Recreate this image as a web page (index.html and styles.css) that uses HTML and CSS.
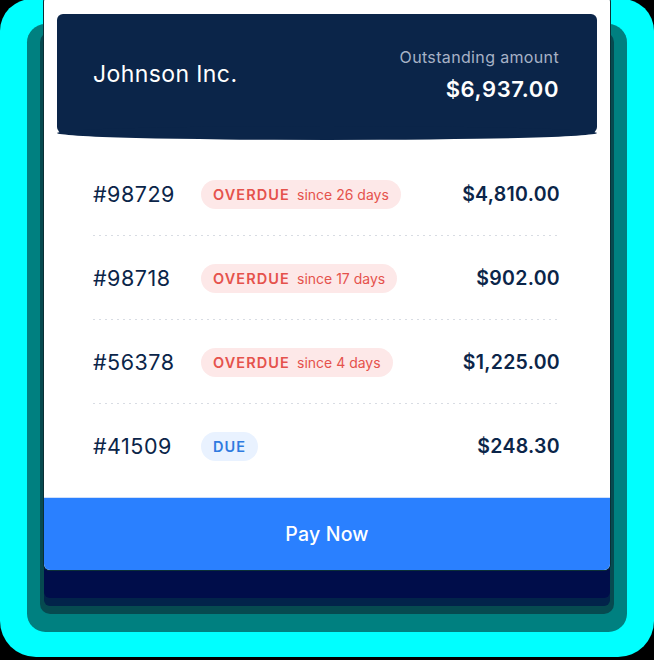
FILE: index.html
```html
<!DOCTYPE html>
<html>
<head>
<meta charset="utf-8">
<link rel="stylesheet" href="styles.css">
</head>
<body>
<div class="glow">
  <div class="card">
    <div class="header">
      <div class="company">Johnson Inc.</div>
      <div class="outstanding">
        <div class="label">Outstanding amount</div>
        <div class="total">$6,937.00</div>
      </div>
    </div>
    <div class="list">
      <div class="row">
        <div class="id">#98729</div>
        <div><span class="pill overdue"><b>OVERDUE</b><span>since 26 days</span></span></div>
        <div class="amount">$4,810.00</div>
      </div>
      <div class="row">
        <div class="id">#98718</div>
        <div><span class="pill overdue"><b>OVERDUE</b><span>since 17 days</span></span></div>
        <div class="amount">$902.00</div>
      </div>
      <div class="row">
        <div class="id">#56378</div>
        <div><span class="pill overdue"><b>OVERDUE</b><span>since 4 days</span></span></div>
        <div class="amount">$1,225.00</div>
      </div>
      <div class="row">
        <div class="id">#41509</div>
        <div><span class="pill due"><b>DUE</b></span></div>
        <div class="amount">$248.30</div>
      </div>
    </div>
    <div class="pay">Pay Now</div>
  </div>
</div>
</body>
</html>
```

FILE: styles.css
```css
html, body {
  margin: 0;
  padding: 0;
  background: #000;
  overflow: hidden;
  height: 660px;
}
body {
  font-family: Inter, "Noto Sans", sans-serif;
  color: #0b2549;
}
.glow {
  margin-top: -1px;
  display: flex;
  flex-direction: column;
  padding: 0 44px 87px;
  background: #00ffff;
  border-radius: 32px 32px 36px 36px;
}
.card {
  margin-top: -3px;
  background: #fff;
  border-radius: 6px;
  padding-top: 18px;
  box-shadow:
    0 0 0 1px #0b3036,
    0 28px 0 0 #000d4a,
    0 36px 0 0 #02234a,
    0 40px 0 4px #064a50,
    0 45px 0 17px #008080;
}
.header {
  position: relative;
  margin: 0 13px;
  height: 119px;
  background: #0b2549;
  border-radius: 6px;
  display: flex;
  align-items: center;
  justify-content: space-between;
  padding: 0 38px 0 36px;
  color: #fff;
}
.header::after {
  content: "";
  position: absolute;
  left: 0;
  right: 0;
  bottom: -7px;
  height: 14px;
  border-radius: 50%;
  background: #0b2549;
}
.company {
  font-size: 23px;
  line-height: 28px;
  letter-spacing: 0.4px;
}
.outstanding {
  text-align: right;
}
.label {
  font-size: 16px;
  line-height: 20px;
  letter-spacing: 0.35px;
  color: #a7b2c6;
  margin-bottom: 10px;
}
.total {
  font-size: 22px;
  line-height: 24px;
  font-weight: 600;
  letter-spacing: 0.6px;
}
.list {
  padding: 19px 50px 9px 49px;
}
.row {
  display: grid;
  grid-template-columns: 108px auto 1fr;
  align-items: center;
  height: 84px;
}
.row:not(:last-child) {
  background-image: linear-gradient(to right, #d8dce3 2px, transparent 2px);
  background-size: 6px 1px;
  background-repeat: repeat-x;
  background-position: left bottom;
}
.id {
  font-size: 21.5px;
  letter-spacing: 0.5px;
}
.pill {
  display: inline-flex;
  align-items: center;
  gap: 7px;
  height: 29px;
  padding: 0 12px;
  border-radius: 15px;
  font-size: 14px;
}
.pill b {
  font-weight: 600;
  font-size: 14.5px;
  letter-spacing: 1.1px;
}
.overdue {
  background: #fde8e8;
  color: #e5524c;
}
.due {
  background: #e9f2ff;
  color: #2f7be0;
}
.amount {
  text-align: right;
  font-size: 19.5px;
  font-weight: 600;
  letter-spacing: 0.3px;
}
.pay {
  height: 72px;
  background: #2a80ff;
  border-top: 1px solid #cfe0fb;
  border-radius: 0 0 6px 6px;
  color: #fff;
  display: flex;
  align-items: center;
  justify-content: center;
  font-size: 19.5px;
  font-weight: 500;
  letter-spacing: 0.2px;
}
```
